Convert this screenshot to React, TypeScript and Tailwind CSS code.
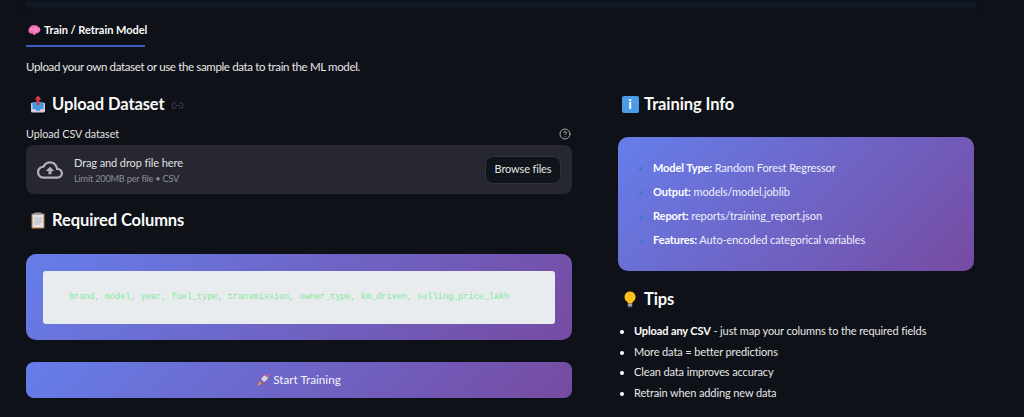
import type { ReactNode } from 'react';
import { CircleHelp, Link2 } from 'lucide-react';

const gradient = 'bg-[linear-gradient(135deg,#667eea_0%,#764ba2_100%)]';

function BrainEmoji() {
  return (
    <svg viewBox="0 0 14 12" className="h-[11px] w-[13px] shrink-0">
      <path d="M4 .6c1-.6 2.400-.6 3.200 0 1.200-.5 2.800 0 3.200 1.100 1.600.3 3 1.700 3 3.500 0 1.500-.9 2.500-2 3-.6 1-1.800 1.300-2.800 1-.4 1-1.500 2-2.600 1.600-.5-.6-.6-1.300-1-1.500C2.400 9.800.4 8.400.4 6 .4 3.800 2 1.800 4 .6z" fill="#f472b6" />
      <path d="M3 4.500c1 0 2 .5 2.500 1.500M7.500 2.500c.5 1 .3 2-.3 3M10 5.500c-1 .2-1.800 1-2 2" stroke="#fbcfe8" strokeWidth=".7" fill="none" />
    </svg>
  );
}

function OutboxEmoji() {
  return (
    <svg viewBox="0 0 16 18" className="h-[18px] w-[16px] shrink-0">
      <path d="M1 8h14v8a1.500 1.500 0 0 1-1.500 1.500h-11A1.500 1.500 0 0 1 1 16z" fill="#d9c7dc" />
      <path d="M2.500 7h11v7h-3a2.500 2 0 0 1-5 0h-3z" fill="#3f9ae0" />
      <path d="M8 .4l3.500 4.200H9.500V10h-3V4.600H4.500z" fill="#e0364c" />
    </svg>
  );
}

function ClipboardEmoji() {
  return (
    <svg viewBox="0 0 14 17" className="h-[17px] w-[14px] shrink-0">
      <rect x=".5" y="1.500" width="13" height="15" rx="1" fill="#c98a54" />
      <rect x="1.700" y="2.600" width="10.600" height="12.800" fill="#e4e4ea" />
      <rect x="3.500" y=".4" width="7" height="2.600" rx=".6" fill="#9aa0aa" />
      <path d="M3 6h8M3 8h8M3 10h8M3 12h6" stroke="#a8a8b4" strokeWidth=".8" />
    </svg>
  );
}

function BulbEmoji() {
  return (
    <svg viewBox="0 0 12 17" className="h-[17px] w-[12px] shrink-0">
      <path d="M6 .5a5.500 5.500 0 0 1 3.200 10c-.6.5-.9 1.200-1 2H4c-.1-.8-.5-1.500-1.100-2A5.500 5.500 0 0 1 6 .5z" fill="#fcc21b" />
      <rect x="3.800" y="12.500" width="4.400" height="3" rx=".6" fill="#a99bb0" />
      <rect x="4.800" y="15.300" width="2.400" height="1.300" rx=".5" fill="#6f6478" />
    </svg>
  );
}

function RocketEmoji() {
  return (
    <svg viewBox="0 0 12 12" className="h-[12px] w-[12px] shrink-0">
      <path d="M3 7.500C1.500 8 1 10 .5 11.500 2 11 4 10.500 4.500 9z" fill="#f79329" />
      <path d="M4 5L1.500 5.500 3 3.500zM7 8l-.5 2.500L8.500 9z" fill="#e0364c" />
      <path d="M11.500.5c-3 0-5.500 1.200-7.500 4.500L7 8c3.300-2 4.500-4.500 4.500-7.500z" fill="#d5d7e0" />
      <path d="M11.500.5c-1.300 0-2.500.2-3.600.8l2.300 2.300c.6-1.100 1.300-1.800 1.300-3.100z" fill="#e0364c" />
    </svg>
  );
}

function SectionTitle({ icon, title, extra }: { icon: ReactNode; title: string; extra?: ReactNode }) {
  return (
    <div className="flex h-[26px] items-center">
      <div className="flex w-[26px] justify-center pl-[3px] pr-[5px]">{icon}</div>
      <h3 className="text-[16.5px] font-bold tracking-[-0.1px] text-[#fafafa]">{title}</h3>
      {extra}
    </div>
  );
}

export default function App() {
  return (
    <div className="h-[417px] w-[1024px] overflow-hidden bg-[#0e1117] pt-[2px] font-['Lato',sans-serif] text-[#fafafa]">
      <div className="ml-[26px] h-[5px] w-[950px] bg-[#131926] shadow-[0_0_5px_#131926]" />

      <div className="px-[26px]">
        <div className="mt-[15px] h-[25px] w-[119px] border-b-2 border-[#3f5cb8]">
          <div className="flex items-center gap-[3px] whitespace-nowrap pl-[2px] text-[11px] font-bold leading-[16px] tracking-[-0.03px]">
            <BrainEmoji />
            Train / Retrain Model
          </div>
        </div>

        <p className="mt-[11px] text-[11.5px] leading-[18px] tracking-[-0.35px] text-[#e8e8e8]">
          Upload your own dataset or use the sample data to train the ML model.
        </p>

        <div className="mt-[15px] grid grid-cols-[546px_356px] gap-x-[46px]">
          <section>
            <SectionTitle
              icon={<OutboxEmoji />}
              title="Upload Dataset"
              extra={<Link2 className="ml-[6px] mt-[2px] h-[13px] w-[13px] text-[#3a3d47]" />}
            />
            <div className="mt-[9px] flex h-[16px] items-center justify-between pr-[1px]">
              <span className="text-[10.7px] text-[#e2e2e2]">Upload CSV dataset</span>
              <CircleHelp className="h-[12px] w-[12px] text-[#a8a8ac]" />
            </div>

            <div className="mt-[3px] flex h-[49px] items-center justify-between rounded-[8px] bg-[#262730] pl-[11px] pr-[11px]">
              <div className="flex items-center gap-[11px]">
                <svg viewBox="0 0 24 24" className="h-[26px] w-[26px] fill-[#b0b2b8]">
                  <path d="M19.350 10.040C18.670 6.590 15.640 4 12 4 9.110 4 6.600 5.640 5.350 8.040 2.340 8.360 0 10.910 0 14c0 3.310 2.690 6 6 6h13c2.760 0 5-2.240 5-5 0-2.640-2.050-4.780-4.650-4.960zM19 18H6c-2.210 0-4-1.790-4-4 0-2.050 1.530-3.760 3.560-3.970l1.070-.11.5-.95C8.080 7.140 9.940 6 12 6c2.620 0 4.880 1.860 5.390 4.430l.3 1.500 1.530.11c1.560.1 2.780 1.410 2.780 2.960 0 1.650-1.350 3-3 3zM8 13h2.550v3h2.900v-3H16l-4-4z" />
                </svg>
                <div>
                  <div className="text-[11px] leading-[17px] tracking-[-0.1px] text-[#e0e0e2]">Drag and drop file here</div>
                  <div className="mt-[1px] text-[9.2px] leading-[14px] tracking-[-0.2px] text-[#8d8e95]">Limit 200MB per file • CSV</div>
                </div>
              </div>
              <button
                type="button"
                className="h-[28px] w-[76px] rounded-[8px] border border-[#2f333d] bg-[#10141b] text-[11px] tracking-[-0.15px] text-[#e4e4e4]"
              >
                Browse files
              </button>
            </div>

            <div className="mt-[13px]">
              <SectionTitle icon={<ClipboardEmoji />} title="Required Columns" />
            </div>

            <div className={`mt-[21px] h-[86px] rounded-[10px] p-[17px] ${gradient}`}>
              <div className="flex h-[53px] items-center rounded-[3px] bg-[#e9ecef] pl-[26px] font-['Liberation_Mono',monospace] text-[8.8px] tracking-[-0.16px] text-[#86e89a]">
                brand, model, year, fuel_type, transmission, owner_type, km_driven, selling_price_lakh
              </div>
            </div>

            <button
              type="button"
              className={`mt-[22px] flex h-[36px] w-full items-center justify-center gap-[4px] rounded-[8px] text-[11.7px] text-[#f2f2f6] ${gradient}`}
            >
              <RocketEmoji />
              Start Training
            </button>
          </section>

          <section>
            <SectionTitle
              icon={
                <span className="flex h-[17px] w-[17px] items-center justify-center rounded-[2px] bg-[#4a9be8] text-[14px] font-bold leading-none text-white">
                  i
                </span>
              }
              title="Training Info"
            />

            <div className={`mt-[20px] h-[134px] rounded-[10px] pl-[35px] pt-[19px] ${gradient}`}>
              <ul className="list-disc text-[11px] leading-[24px] tracking-[-0.1px] text-[#eef0fb] marker:text-[#3f78cf]">
                <li><strong className="font-bold text-white">Model Type:</strong> Random Forest Regressor</li>
                <li><strong className="font-bold text-white">Output:</strong> models/model.joblib</li>
                <li><strong className="font-bold text-white">Report:</strong> reports/training_report.json</li>
                <li><strong className="font-bold text-white">Features:</strong> Auto-encoded categorical variables</li>
              </ul>
            </div>

            <div className="mt-[15px]">
              <SectionTitle icon={<BulbEmoji />} title="Tips" />
            </div>

            <ul className="mt-[9px] list-disc pl-[16px] text-[11px] leading-[20.6px] tracking-[-0.12px] text-[#e8e8e8] marker:text-white">
              <li><strong className="font-bold text-white">Upload any CSV</strong> - just map your columns to the required fields</li>
              <li>More data = better predictions</li>
              <li>Clean data improves accuracy</li>
              <li>Retrain when adding new data</li>
            </ul>
          </section>
        </div>
      </div>
    </div>
  );
}
